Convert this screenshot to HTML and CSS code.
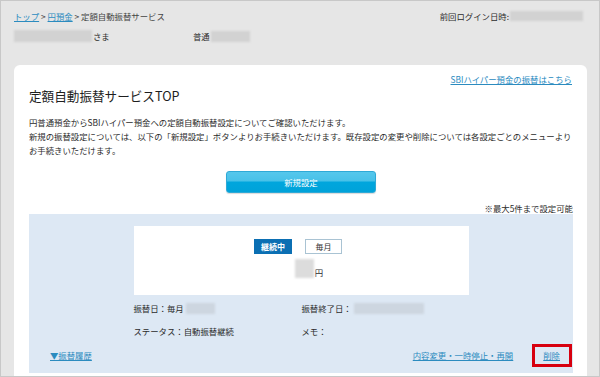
FILE: index.html
```html
<!DOCTYPE html>
<html lang="ja">
<head>
<meta charset="utf-8">
<title>定額自動振替サービスTOP</title>
<link rel="stylesheet" href="styles.css">
</head>
<body>
<div class="frame">

  <div class="head">
    <div class="crumbRow">
      <div class="crumbs">
        <a href="#" class="lnk">トップ</a> &gt; <a href="#" class="lnk">円預金</a> &gt; 定額自動振替サービス
      </div>
      <div class="lastLogin">前回ログイン日時:<span class="blur blurDate"></span></div>
    </div>
    <div class="userRow">
      <div class="userName"><span class="blur blurName"></span>さま</div>
      <div class="account">普通<span class="blur blurAcct"></span></div>
    </div>
  </div>

  <div class="card">
    <div class="topLink"><a href="#" class="lnk">SBIハイパー預金の振替はこちら</a></div>
    <h1 class="title">定額自動振替サービスTOP</h1>
    <p class="lead">
      円普通預金からSBIハイパー預金への定額自動振替設定についてご確認いただけます。<br>
      新規の振替設定については、以下の「新規設定」ボタンよりお手続きいただけます。既存設定の変更や削除については各設定ごとのメニューより<br>
      お手続きいただけます。
    </p>
    <div class="btnRow"><a href="#" class="btnNew">新規設定</a></div>
    <div class="note">※最大5件まで設定可能</div>

    <div class="setting">
      <div class="summary">
        <div class="badges">
          <span class="badge badgeOn">継続中</span>
          <span class="badge badgeCycle">毎月</span>
        </div>
        <div class="amount"><span class="blur blurAmount"></span>円</div>
      </div>

      <div class="details">
        <div class="item">振替日：毎月<span class="blur blurDay"></span></div>
        <div class="item">振替終了日：<span class="blur blurEnd"></span></div>
        <div class="item">ステータス：自動振替継続</div>
        <div class="item">メモ：</div>
      </div>

      <div class="actions">
        <a href="#" class="lnk">▼振替履歴</a>
        <div class="actRight">
          <a href="#" class="lnk">内容変更・一時停止・再開</a>
          <span class="delWrap"><a href="#" class="lnk">削除</a><span class="mark"></span></span>
        </div>
      </div>
    </div>
  </div>

</div>
</body>
</html>
```

FILE: styles.css
```css
body {
  margin: 0px;
  padding: 0px;
  font-family: "Noto Sans CJK JP", sans-serif;
  font-size: 8.4px;
  color: #2b2b2b;
}

.frame {
  width: 600px;
  height: 377px;
  box-sizing: border-box;
  border: 1px solid #c8c8c8;
  background-color: #e6e6e6;
  padding: 0px 12px 0px 13px;
  overflow: hidden;
}

a.lnk:link, a.lnk:visited { color: #2b8bbf; text-decoration: underline; }

.blur {
  display: inline-block;
  background-color: #d2d2d2;
  filter: blur(1.2px);
  vertical-align: middle;
}

/* header */
.head { padding-right: 4px; }
.crumbRow { display: flex; justify-content: space-between; margin-top: 9px; line-height: 12px; }
.crumbs { color: #444; }
.lastLogin { display: flex; align-items: center; }
.blurDate { width: 73px; height: 10px; margin-left: 1px; }

.userRow { display: flex; margin-top: 8px; line-height: 12px; }
.userName { width: 179px; display: flex; align-items: center; }
.blurName { width: 78px; height: 12px; margin-right: 1px; }
.account { display: flex; align-items: center; }
.blurAcct { width: 39px; height: 11px; margin-left: 1px; }

/* card */
.card {
  margin-top: 23px;
  background-color: #ffffff;
  border-radius: 6px 6px 0px 0px;
  padding: 8px 14px 0px 15px;
  height: 320px;
}

.topLink { text-align: right; line-height: 12px; padding-right: 1px; }

.title {
  margin: 2px 0px 0px 0px;
  font-size: 12.6px;
  font-weight: normal;
  line-height: 18px;
  color: #1e1e1e;
}

.lead { margin: 10px 0px 0px 0px; line-height: 14px; }

.btnRow { margin-top: 14px; display: flex; justify-content: center; }
.btnNew {
  display: block;
  width: 148px;
  height: 20px;
  line-height: 20px;
  text-align: center;
  color: #ffffff;
  text-decoration: none;
  border: 1px solid #2ea9d6;
  border-radius: 3px;
  background: linear-gradient(#55c7ec 0%, #48c1e8 45%, #00a6dd 50%, #00a2d9 100%);
  box-shadow: 0px 1px 1px rgba(0,0,0,0.15);
}

.note { margin-top: 9px; text-align: right; line-height: 12px; }

/* setting block */
.setting {
  background-color: #dde8f4;
  padding: 12px 13px 11px 21px;
}

.summary {
  width: 335px;
  height: 69px;
  box-sizing: border-box;
  margin: 0px auto;
  position: relative;
  left: -4px;
  background-color: #ffffff;
  padding-top: 13px;
}

.badges { display: flex; justify-content: center; gap: 13px; padding-right: 6px; }
.badge {
  display: block;
  height: 15px;
  line-height: 15px;
  box-sizing: border-box;
  text-align: center;
  font-size: 8px;
}
.badgeOn { width: 38px; background-color: #0b6fb3; color: #ffffff; font-weight: bold; }
.badgeCycle { width: 37px; border: 1px solid #a9c3d3; line-height: 13px; color: #333; }

.amount { display: flex; justify-content: center; align-items: flex-end; margin-top: 5px; padding-left: 16px; line-height: 12px; }
.blurAmount { width: 19px; height: 19px; background-color: #dcdcdc; margin-right: 1px; }

.details {
  width: 335px;
  margin: 6px auto 0px auto;
  position: relative;
  left: -4px;
  display: grid;
  grid-template-columns: 168px 1fr;
  row-gap: 9px;
  line-height: 14px;
}
.item { display: flex; align-items: center; }
.blurDay { width: 29px; height: 11px; background-color: #cdd6e0; margin-left: 2px; }
.blurEnd { width: 70px; height: 11px; background-color: #cdd6e0; margin-left: 2px; }

.actions {
  margin-top: 10px;
  display: flex;
  justify-content: space-between;
  line-height: 14px;
}
.actRight { display: flex; gap: 30px; }
.delWrap { position: relative; }
.mark {
  position: absolute;
  left: -11px;
  right: -12px;
  top: -4px;
  bottom: -5px;
  border: 3px solid #d7000f;
}
```
